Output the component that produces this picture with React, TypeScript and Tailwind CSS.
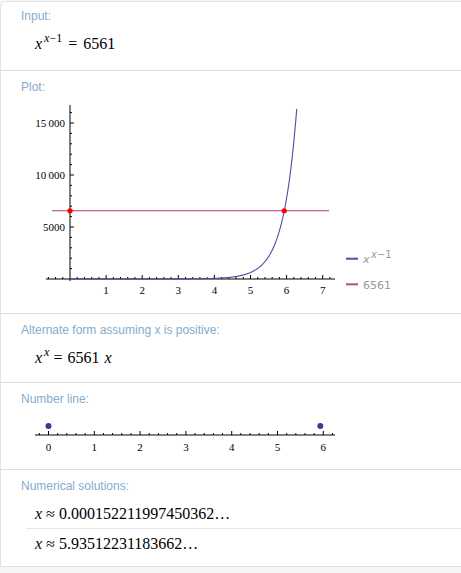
import React from 'react';

const serifCls = "font-['Liberation_Serif','Times_New_Roman',serif]";
const sansCls = "font-['DejaVu_Sans',sans-serif]";

function Label({ children }: { children: React.ReactNode }) {
  return (
    <div className="pl-5 text-[12px] leading-[14px] text-[#86abcb] font-['Liberation_Sans',Arial,sans-serif]">
      {children}
    </div>
  );
}

function Plot() {
  const ox = 69;
  const oy = 179;
  const sx = 36.1;
  const sy = 0.0104;
  const pts: string[] = [];
  for (let i = 1; i <= 628; i++) {
    const x = i / 100;
    const v = Math.pow(x, x - 1);
    pts.push(`${(ox + x * sx).toFixed(2)},${(oy - v * sy).toFixed(2)}`);
  }
  const xt: number[] = [];
  for (let k = -3; k <= 36; k++) xt.push(k);
  const yt: number[] = [];
  for (let k = 1; k <= 16; k++) yt.push(k);
  const hy = oy - 6561 * sy;
  return (
    <svg width="461" height="200" className="block">
      <line x1="45" y1={oy} x2="334" y2={oy} stroke="#000" strokeWidth="1" />
      <line x1={ox} y1="5" x2={ox} y2="181" stroke="#000" strokeWidth="1" />
      {xt.map((k) =>
        k === 0 ? null : (
          <line key={k} x1={ox + k * 0.2 * sx} x2={ox + k * 0.2 * sx} y1={oy} y2={oy - (k % 5 === 0 ? 4 : 2)} stroke="#000" strokeWidth="1" />
        )
      )}
      {yt.map((k) => (
        <line key={k} x1={ox} x2={ox + (k % 5 === 0 ? 4 : 2)} y1={oy - k * 1000 * sy} y2={oy - k * 1000 * sy} stroke="#000" strokeWidth="1" />
      ))}
      {[1, 2, 3, 4, 5, 6, 7].map((n) => (
        <text key={n} x={ox + n * sx} y="194" fontSize="11" textAnchor="middle" className={serifCls} fill="#000">
          {n}
        </text>
      ))}
      {[
        ['5000', 5000],
        ['10\u2009000', 10000],
        ['15\u2009000', 15000],
      ].map(([t, v]) => (
        <text key={t as string} x="64" y={oy - (v as number) * sy + 4} fontSize="11" textAnchor="end" className={serifCls} fill="#000">
          {t}
        </text>
      ))}
      <line x1="51" x2="328" y1={hy} y2={hy} stroke="#b3346f" strokeWidth="1" />
      <polyline points={pts.join(' ')} fill="none" stroke="#4b4ba6" strokeWidth="1.1" />
      <circle cx={ox} cy={hy} r="2.6" fill="#ff0000" />
      <circle cx={ox + 5.9351 * sx} cy={hy} r="2.6" fill="#ff0000" />
      <line x1="345" x2="357" y1="158.7" y2="158.7" stroke="#4a4aa8" strokeWidth="2" />
      <text x="362" y="163" fontSize="11" fill="#999" fontStyle="italic" className={sansCls}>
        x
      </text>
      <text x="370" y="158" fontSize="10" fill="#999" className={sansCls}>
        <tspan fontStyle="italic">x</tspan>−1
      </text>
      <line x1="345" x2="357" y1="184.3" y2="184.3" stroke="#a8508a" strokeWidth="2" />
      <text x="362" y="188.5" fontSize="11" fill="#999" className={sansCls}>
        6561
      </text>
    </svg>
  );
}

function NumberLine() {
  const ox = 47.5;
  const s = 45.8;
  const ay = 20;
  const ticks: number[] = [];
  for (let k = -1; k <= 31; k++) ticks.push(k);
  return (
    <svg width="461" height="40" className="block">
      <line x1="34" x2="334" y1={ay} y2={ay} stroke="#000" strokeWidth="1" />
      {ticks.map((k) => (
        <line key={k} x1={ox + k * 0.2 * s} x2={ox + k * 0.2 * s} y1={ay} y2={ay - (k % 5 === 0 ? 4 : 2)} stroke="#000" strokeWidth="1" />
      ))}
      {[0, 1, 2, 3, 4, 5, 6].map((n) => (
        <text key={n} x={ox + n * s} y="36" fontSize="11" textAnchor="middle" className={serifCls} fill="#000">
          {n}
        </text>
      ))}
      <circle cx={ox} cy="11" r="3" fill="#3a3a98" />
      <circle cx={ox + 5.9351 * s} cy="11" r="3" fill="#3a3a98" />
    </svg>
  );
}

export default function App() {
  return (
    <div className="w-[461px] h-[573px] bg-[#f6f6f6] overflow-hidden">
      <div className="mt-px bg-white border-t border-l border-[#e2e2e2] rounded-tl-[6px]">
        {/* Input */}
        <div className="h-[69px] pt-[7px] border-b border-[#dedede]">
          <Label>Input:</Label>
          <div className={`mt-[11px] pl-[34px] text-[16px] leading-[20px] text-black ${serifCls}`}>
            <i>x</i>
            <sup className="text-[12px] -top-[7px] ml-[2px]">
              <i>x</i>−1
            </sup>
            <span className="ml-[6px]">=</span>
            <span className="ml-[6px]">6561</span>
          </div>
        </div>

        {/* Plot */}
        <div className="h-[243px] pt-[9px] border-b border-[#dedede]">
          <Label>Plot:</Label>
          <div className="mt-[6px]">
            <Plot />
          </div>
        </div>

        {/* Alternate form */}
        <div className="h-[69px] pt-[9px] border-b border-[#dedede]">
          <Label>Alternate form assuming x is positive:</Label>
          <div className={`mt-[11px] pl-[34px] text-[16px] leading-[20px] text-black ${serifCls}`}>
            <i>x</i>
            <sup className="text-[12px] -top-[7px] ml-[2px]">
              <i>x</i>
            </sup>
            <span className="ml-[4px]">=</span>
            <span className="ml-[5px]">6561</span>
            <i className="ml-[5px]">x</i>
          </div>
        </div>

        {/* Number line */}
        <div className="h-[87px] pt-[9px] border-b border-[#dedede]">
          <Label>Number line:</Label>
          <div className="mt-[9px]">
            <NumberLine />
          </div>
        </div>

        {/* Numerical solutions */}
        <div className="h-[97px] pt-[9px] border-b border-[#dedede]">
          <Label>Numerical solutions:</Label>
          <div className={`mt-[11px] ml-[25px] text-[16px] leading-[20px] text-black ${serifCls}`}>
            <div className="pl-[9px] pb-[4px] border-b border-[#e2e9ef]">
              <i>x</i> ≈ 0.000152211997450362…
            </div>
            <div className="pl-[9px] pt-[5px]">
              <i>x</i> ≈ 5.93512231183662…
            </div>
          </div>
        </div>
      </div>
    </div>
  );
}
